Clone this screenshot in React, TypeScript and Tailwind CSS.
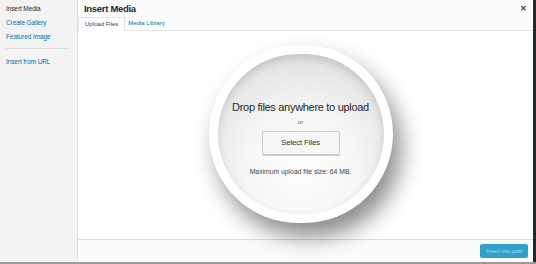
import React from "react";

export default function App() {
  return (
    <div className="w-[536px] h-[264px] flex flex-col bg-white overflow-hidden" style={{ fontFamily: '"Liberation Sans", Arial, sans-serif' }}>
      <div className="flex flex-1 min-h-0">
        {/* Sidebar */}
        <div className="w-[78px] shrink-0 bg-[#f3f3f3] border-r border-[#e2e2e2] flex flex-col pt-[3px] px-[6px]">
          <div className="text-[6.5px] tracking-[-0.1px] leading-[11px] text-[#23282d]">Insert Media</div>
          <div className="text-[6.5px] tracking-[-0.1px] leading-[11px] text-[#0073aa] mt-[3px]">Create Gallery</div>
          <div className="text-[6.5px] tracking-[-0.1px] leading-[11px] text-[#0073aa] mt-[3px]">Featured Image</div>
          <div className="h-px bg-[#dcdcdc] mt-[6px] mr-[2px]" />
          <div className="text-[6.5px] tracking-[-0.1px] leading-[11px] text-[#0073aa] mt-[7px]">Insert from URL</div>
        </div>
        {/* Main */}
        <div className="flex-1 flex flex-col min-w-0">
          <div className="h-[17px] flex items-center justify-between pl-[6px] pr-[6px] bg-[#fcfcfc]">
            <span className="text-[9.5px] font-semibold tracking-[-0.3px] text-[#23282d] leading-none">Insert Media</span>
            <span className="text-[8px] font-bold text-[#444] leading-none">✕</span>
          </div>
          <div className="h-[14px] flex items-end bg-[#fcfcfc] border-b border-[#e5e5e5]">
            <div className="h-[14px] px-[6px] flex items-center bg-white border-x border-t border-[#e5e5e5] text-[6px] text-[#444] -mb-px">Upload Files</div>
            <div className="h-[14px] px-[3px] flex items-center text-[6px] text-[#0073aa]">Media Library</div>
          </div>
          <div className="flex-1 flex items-center justify-center bg-white relative">
            <div className="w-[184px] h-[178px] -ml-[10px] -mt-[2px] rounded-full bg-white p-[9px] shadow-[8px_14px_22px_rgba(0,0,0,0.45)] relative z-10">
              <div className="w-full h-full rounded-full bg-[radial-gradient(circle_at_50%_72%,#ffffff_0%,#f6f6f6_40%,#e2e2e2_80%,#cfcfcf_100%)] shadow-[inset_0_4px_8px_rgba(0,0,0,0.14)] flex flex-col items-center pt-[45px]">
                <div className="text-[11px] tracking-[-0.3px] text-[#23282d] leading-[16px] whitespace-nowrap">Drop files anywhere to upload</div>
                <div className="text-[6px] text-[#555] mt-[3px] leading-[9px]">or</div>
                <div className="mt-[4px] w-[78px] h-[24px] flex items-center justify-center bg-[#f7f7f7] border border-[#cccccc] rounded-[2px] text-[8px] tracking-[-0.2px] text-[#333] shadow-[0_1px_0_#ccc]">Select Files</div>
                <div className="mt-[12px] text-[6.8px] text-[#444] leading-[9px] whitespace-nowrap">Maximum upload file size: 64 MB.</div>
              </div>
            </div>
          </div>
          <div className="h-[23px] bg-[#fcfcfc] border-t border-[#dddddd] flex items-center justify-end pr-[5px]">
            <div className="w-[48px] h-[14px] bg-[#2ea2cc] rounded-[2px] flex items-center justify-center text-[5.5px] text-[#a8d8ec] whitespace-nowrap">Insert into post</div>
          </div>
        </div>
        <div className="w-[3px] bg-[#23282d] shrink-0" />
      </div>
      <div className="h-[2px] bg-[#9a9a9a]" />
    </div>
  );
}
